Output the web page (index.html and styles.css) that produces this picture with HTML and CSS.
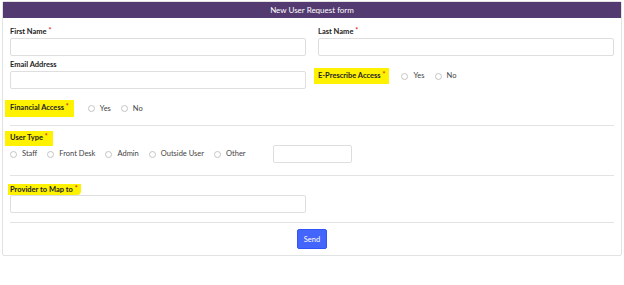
FILE: index.html
```html
<!DOCTYPE html>
<html lang="en">
<head>
    <meta charset="UTF-8">
    <meta name="viewport" content="width=device-width, initial-scale=1.0">
    <title>New User Request form</title>
    <link rel="stylesheet" href="styles.css">
</head>
<body>
    <div class="card">
        <div class="card-header">New User Request form</div>
        <form class="card-body">
            <div class="grid">
                <div class="field">
                    <label class="field-label">First Name <span class="req">*</span></label>
                    <input type="text" class="text-input">
                </div>
                <div class="field">
                    <label class="field-label">Last Name <span class="req">*</span></label>
                    <input type="text" class="text-input">
                </div>
                <div class="field">
                    <label class="field-label">Email Address</label>
                    <input type="text" class="text-input">
                </div>
                <div class="field inline-field">
                    <span class="mark mark-eps">E-Prescribe Access <span class="req">*</span></span>
                    <div class="radios">
                        <label class="radio"><span class="dot"></span>Yes</label>
                        <label class="radio"><span class="dot"></span>No</label>
                    </div>
                </div>
            </div>

            <div class="inline-field financial">
                <span class="mark mark-fin">Financial Access <span class="req">*</span></span>
                <div class="radios">
                    <label class="radio"><span class="dot"></span>Yes</label>
                    <label class="radio"><span class="dot"></span>No</label>
                </div>
            </div>

            <hr class="sep sep-1">

            <span class="mark mark-type">User Type <span class="req">*</span></span>
            <div class="type-row">
                <div class="radios">
                    <label class="radio"><span class="dot"></span>Staff</label>
                    <label class="radio"><span class="dot"></span>Front Desk</label>
                    <label class="radio"><span class="dot"></span>Admin</label>
                    <label class="radio"><span class="dot"></span>Outside User</label>
                    <label class="radio"><span class="dot"></span>Other</label>
                </div>
                <input type="text" class="text-input other-input">
            </div>

            <hr class="sep sep-2">

            <div class="half">
                <span class="mark mark-prov">Provider to Map to <span class="req">*</span></span>
                <input type="text" class="text-input">
            </div>

            <hr class="sep sep-3">

            <div class="actions">
                <button type="button" class="send-btn">Send</button>
            </div>
        </form>
    </div>
</body>
</html>
```

FILE: styles.css
```css
body {
    font-family: 'Lato', 'Open Sans', sans-serif;
    margin: 0;
    padding: 1px 2px;
    background-color: #fff;
    color: #222;
}

.card {
    border: 1px solid #e2e2e2;
    border-radius: 2px;
    background-color: #fff;
}

.card-header {
    height: 16px;
    line-height: 16px;
    background-color: #533a71;
    color: #fff;
    text-align: center;
    font-size: 8px;
}

.card-body {
    padding: 9px 7px 6px;
}

.grid {
    display: grid;
    grid-template-columns: 1fr 1fr;
    column-gap: 12px;
    row-gap: 4px;
}

.field-label,
.mark {
    display: block;
    font-size: 7.5px;
    font-weight: bold;
    line-height: 10px;
    margin-bottom: 1px;
    color: #222;
}

.req {
    color: #e0202a;
    font-size: 7px;
    line-height: 1;
    vertical-align: top;
}

.text-input {
    display: block;
    box-sizing: border-box;
    width: 100%;
    height: 18px;
    border: 1px solid #dedede;
    border-radius: 2px;
    background-color: #fff;
    margin: 0;
    padding: 0 4px;
}

.inline-field {
    display: flex;
    align-items: center;
}

.grid .inline-field {
    padding-top: 3px;
}

.mark {
    width: fit-content;
    background-color: #fff200;
    margin-bottom: 0;
}

.mark-eps {
    padding: 3px 4px;
    margin-left: -4px;
}

.financial {
    margin-top: 11px;
}

.mark-fin {
    padding: 3px 5px 4px;
    margin-left: -5px;
}

.mark-type {
    padding: 2px 5px 3px;
    margin: 5px 0 0 -5px;
}

.mark-prov {
    padding: 1px 3px 0 2px;
    margin: 8px 0 0 -2px;
    border-radius: 0 0 4px 0;
}

.radios {
    display: flex;
    align-items: center;
    gap: 10px;
    margin-left: 14px;
}

.mark-eps + .radios {
    margin-left: 12px;
}

.radio {
    display: flex;
    align-items: center;
    gap: 5px;
    font-size: 7.5px;
    line-height: 10px;
    color: #444;
}

.dot {
    box-sizing: border-box;
    width: 7px;
    height: 7px;
    border: 1px solid #c4c4c4;
    border-radius: 50%;
}

.type-row {
    display: flex;
    align-items: center;
    margin-top: -1px;
}

.type-row .radios {
    margin-left: 0;
}

.other-input {
    width: 79px;
    margin-left: 27px;
}

.sep {
    border: none;
    border-top: 1px solid #e2e2e2;
    margin: 0;
}

.sep-1 {
    margin-top: 8px;
}

.sep-2 {
    margin-top: 12px;
}

.sep-3 {
    margin-top: 9px;
}

.half {
    width: 296px;
}

.actions {
    display: flex;
    justify-content: center;
    margin-top: 6px;
}

.send-btn {
    width: 30px;
    height: 20px;
    padding: 0;
    border: 1px solid #2f55f5;
    border-radius: 2px;
    background-color: #4465fb;
    color: #fff;
    font-family: 'Lato', sans-serif;
    font-size: 7.5px;
    cursor: pointer;
}
```
